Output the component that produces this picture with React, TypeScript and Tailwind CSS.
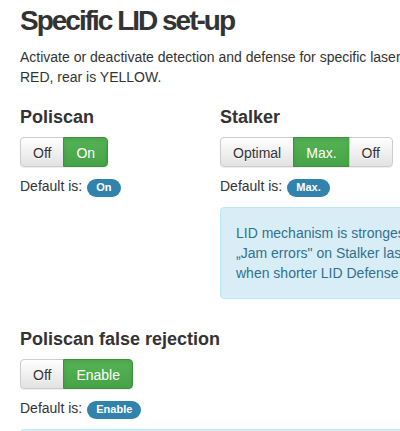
import React from 'react';

type Option = { label: string; active?: boolean };

function ButtonGroup({ options }: { options: Option[] }) {
  return (
    <div className="inline-flex rounded-[4px] shadow-[0_1px_1px_rgba(0,0,0,0.075)]">
      {options.map((opt, i) => {
        const first = i === 0;
        const last = i === options.length - 1;
        const corners = first ? 'rounded-l-[4px]' : last ? 'rounded-r-[4px]' : '';
        const shift = first ? '' : '-ml-px';
        const look = opt.active
          ? 'border-[#3e8f3e] bg-linear-to-b from-[#55b455] to-[#46a346] text-white shadow-[inset_0_2px_4px_rgba(0,0,0,0.1)]'
          : 'border-[#cccccc] bg-linear-to-b from-white to-[#e2e2e2] text-[#333] [text-shadow:0_1px_0_#fff]';
        return (
          <button
            key={opt.label}
            type="button"
            className={`relative border px-3 pt-[5px] pb-[3px] text-[14px] leading-5 ${corners} ${shift} ${look}`}
          >
            {opt.label}
          </button>
        );
      })}
    </div>
  );
}

function DefaultIs({ value }: { value: string }) {
  return (
    <div className="mt-[9px] flex h-5 items-center text-[14px] leading-5 text-[#333]">
      <span>Default is:</span>
      <span className="ml-[5px] mt-[3px] inline-flex h-[18px] items-center rounded-full bg-[#3282ae] px-[9px] text-[11px] font-bold leading-none text-white">
        {value}
      </span>
    </div>
  );
}

function InfoBox({ children, className = '' }: { children: React.ReactNode; className?: string }) {
  return (
    <div
      className={`rounded-[4px] border border-[#bce8f1] bg-[#d9edf7] px-[15px] py-[15px] text-[14px] leading-5 whitespace-nowrap text-[#31708f] ${className}`}
    >
      {children}
    </div>
  );
}

export default function App() {
  return (
    <div className="h-[431px] w-[400px] overflow-hidden bg-white [font-family:'Liberation_Sans',Arial,sans-serif] text-[#333]">
      <div className="w-[760px] px-5">
        <h2 className="mt-[4px] text-[28px] font-bold leading-[33px] tracking-[-2px] text-[#333]">Specific LID set-up</h2>
        <p className="mt-[10px] mb-[10px] text-[14px] leading-5">
          Activate or deactivate detection and defense for specific laser guns. Front LED is
          <br />
          RED, rear is YELLOW.
        </p>

        <div className="flex">
          <div className="w-[200px]">
            <h4 className="mt-[10px] mb-[10px] text-[18px] font-bold leading-[20px]">Poliscan</h4>
            <ButtonGroup options={[{ label: 'Off' }, { label: 'On', active: true }]} />
            <DefaultIs value="On" />
          </div>
          <div className="w-[520px]">
            <h4 className="mt-[10px] mb-[10px] text-[18px] font-bold leading-[20px]">Stalker</h4>
            <ButtonGroup options={[{ label: 'Optimal' }, { label: 'Max.', active: true }, { label: 'Off' }]} />
            <DefaultIs value="Max." />
            <InfoBox className="mt-[11px]">
              LID mechanism is strongest on Max. setting. If you experience
              <br />
              „Jam errors" on Stalker laser guns, switch to Optimal mode
              <br />
              when shorter LID Defense is sufficient for you.
            </InfoBox>
          </div>
        </div>

        <h4 className="mt-[30px] mb-[10px] text-[18px] font-bold leading-[20px]">Poliscan false rejection</h4>
        <ButtonGroup options={[{ label: 'Off' }, { label: 'Enable', active: true }]} />
        <DefaultIs value="Enable" />
        <InfoBox className="mt-[11px]">
          False rejection makes Poliscan laser guns report a measurement error instead of a speed.
        </InfoBox>
      </div>
    </div>
  );
}
